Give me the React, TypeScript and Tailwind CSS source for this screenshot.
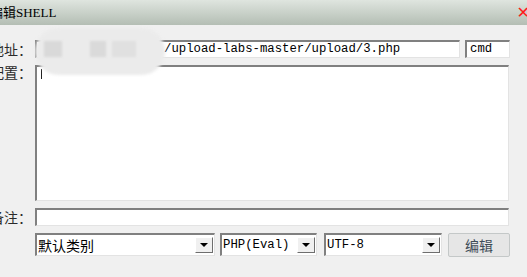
import React from "react";

const mono = { fontFamily: '"Liberation Mono", "Noto Sans CJK SC", monospace' } as React.CSSProperties;
const cjk = { fontFamily: '"Noto Sans CJK SC", "Noto Sans", sans-serif' } as React.CSSProperties;

function Sunken({ className = "", children }: { className?: string; children?: React.ReactNode }) {
  return (
    <div className={"border-t-2 border-l-2 border-b border-r border-t-[#808080] border-l-[#808080] border-b-[#e3e3e3] border-r-[#e3e3e3] bg-white " + className}>
      {children}
    </div>
  );
}

function DropBtn() {
  return (
    <div className="w-[18px] h-[16px] my-auto mr-[1px] bg-[#f0f0f0] border border-t-white border-l-white border-b-[#6e6e6e] border-r-[#6e6e6e] flex items-center justify-center">
      <div className="w-0 h-0 border-l-[4px] border-r-[4px] border-t-[4px] border-l-transparent border-r-transparent border-t-black" />
    </div>
  );
}

function Select({ w, text, font, size }: { w: string; text: string; font: React.CSSProperties; size: string }) {
  return (
    <Sunken className={w + " h-[23px] flex items-stretch"}>
      <div className={"flex-1 flex items-center pl-[1px] text-black whitespace-nowrap overflow-hidden leading-none " + size} style={font}>
        {text}
      </div>
      <DropBtn />
    </Sunken>
  );
}

function Label({ text, top = false }: { text: string; top?: boolean }) {
  return (
    <div className={"w-[35px] shrink-0 flex justify-end pr-[3px] " + (top ? "items-start" : "items-center")}>
      <span className="whitespace-nowrap text-[14px] text-[#2a2a2a] leading-none" style={cjk}>
        {text}
      </span>
    </div>
  );
}

export default function App() {
  return (
    <div className="w-[527px] h-[277px] bg-[#f0f0f0] overflow-hidden relative">
      <div className="h-[25px] bg-gradient-to-b from-[#dfe5df] to-[#b4beb4] flex items-center relative">
        <span className="ml-[-10px] text-[13px] text-black leading-none" style={{ fontFamily: '"Liberation Serif", "Noto Sans CJK SC", serif' }}>
          编辑SHELL
        </span>
        <span className="absolute right-[-3px] top-[5px] text-[#ff1a1a] font-bold text-[16px] leading-none" style={{ fontFamily: '"DejaVu Sans", sans-serif' }}>
          ✕
        </span>
      </div>

      <div className="pt-[15px] flex flex-col gap-[7px]">
        <div className="flex h-[18px]">
          <Label text="地址：" />
          <Sunken className="w-[425px] flex items-center pl-[2px] overflow-hidden">
            <span className="text-[12.3px] text-black whitespace-nowrap leading-none pl-[125px]" style={mono}>
              /upload-labs-master/upload/3.php
            </span>
          </Sunken>
          <Sunken className="w-[45px] ml-[5px] flex items-center pl-[3px]">
            <span className="text-[12.3px] text-black leading-none" style={mono}>cmd</span>
          </Sunken>
        </div>

        <div className="flex h-[136px]">
          <Label text="配置：" top />
          <Sunken className="w-[474px] relative">
            <div className="absolute left-[4px] top-[2px] w-[1px] h-[10px] bg-[#222]" />
          </Sunken>
        </div>

        <div className="flex h-[18px]">
          <Label text="备注：" />
          <Sunken className="w-[474px]" />
        </div>

        <div className="flex h-[23px] items-center">
          <div className="w-[35px] shrink-0" />
          <Select w="w-[180px]" text="默认类别" font={cjk} size="text-[14px]" />
          <div className="w-[5px]" />
          <Select w="w-[97px]" text="PHP(Eval)" font={mono} size="text-[12.3px]" />
          <div className="w-[7px]" />
          <Select w="w-[118px]" text="UTF-8" font={mono} size="text-[12.3px]" />
          <div className="w-[6px]" />
          <button className="w-[62px] h-[24px] bg-[#e6e6e6] border border-[#c4c8c8] rounded-[2px] text-[14px] text-[#3e4c58] leading-none" style={cjk}>
            编辑
          </button>
        </div>
      </div>

      {/* privacy blur */}
      <div className="absolute left-[35px] top-[28px] w-[130px] h-[47px] rounded-[24px] bg-[#ebebeb] blur-[1.5px]" />
      <div className="absolute left-[44px] top-[41px] w-[18px] h-[16px] bg-[#d9d9d9] blur-[1px]" />
      <div className="absolute left-[90px] top-[41px] w-[16px] h-[16px] bg-[#dadada] blur-[1px]" />
      <div className="absolute left-[112px] top-[41px] w-[24px] h-[16px] bg-[#e0e0e0] blur-[1px]" />
    </div>
  );
}
